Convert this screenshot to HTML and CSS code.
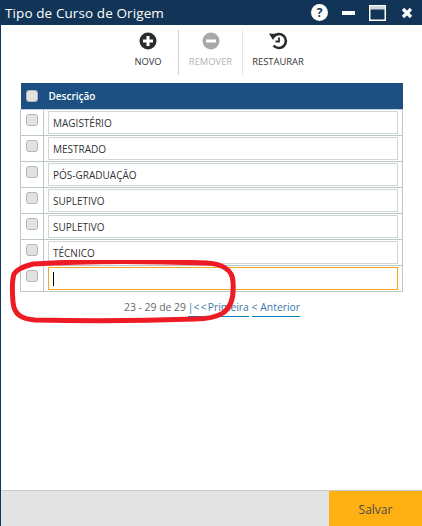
FILE: index.html
```html
<!DOCTYPE html>
<html lang="pt-BR">
<head>
    <meta charset="UTF-8">
    <title>Tipo de Curso de Origem</title>
    <link rel="stylesheet" href="styles.css">
</head>
<body>
    <div class="window">
        <div class="titlebar">
            <span class="title">Tipo de Curso de Origem</span>
            <div class="window-icons">
                <span class="help">?</span>
                <span class="minimize"></span>
                <svg class="maximize" width="17" height="16" viewBox="0 0 17 16">
                    <rect x="0.75" y="0.75" width="15.5" height="14.5" fill="none" stroke="#fff" stroke-width="1.5"/>
                    <rect x="1" y="1" width="15" height="3.5" fill="#cfd6de"/>
                </svg>
                <svg class="close" width="12" height="12" viewBox="0 0 12 12">
                    <path d="M2 2 L10 10 M10 2 L2 10" stroke="#fff" stroke-width="3.2" fill="none"/>
                </svg>
            </div>
        </div>

        <div class="content">
            <div class="toolbar">
                <div class="tool tool-novo">
                    <svg width="18" height="18" viewBox="0 0 18 18">
                        <circle cx="9" cy="9" r="8.5" fill="#2b2b2b"/>
                        <path d="M9 4 V14 M4 9 H14" stroke="#fff" stroke-width="3"/>
                    </svg>
                    <span>NOVO</span>
                </div>
                <div class="tool tool-remover">
                    <svg width="18" height="18" viewBox="0 0 18 18">
                        <circle cx="9" cy="9" r="8.5" fill="#a8a8a8"/>
                        <path d="M4 9 H14" stroke="#fff" stroke-width="3"/>
                    </svg>
                    <span>REMOVER</span>
                </div>
                <div class="tool tool-restaurar">
                    <svg width="20" height="18" viewBox="0 0 20 18">
                        <path d="M5.2 5 A7 7 0 1 1 5.5 13.5" fill="none" stroke="#2b2b2b" stroke-width="2.6"/>
                        <path d="M1 1.5 L8.5 2 L5 8 Z" fill="#2b2b2b"/>
                        <path d="M11 5.5 V9.5 H7.5" fill="none" stroke="#2b2b2b" stroke-width="1.8"/>
                    </svg>
                    <span>RESTAURAR</span>
                </div>
            </div>

            <table class="grid">
                <thead>
                    <tr>
                        <th class="check-col"><span class="check"></span></th>
                        <th>Descrição</th>
                    </tr>
                </thead>
                <tbody>
                    <tr>
                        <td class="check-col"><span class="check"></span></td>
                        <td><div class="field">MAGISTÉRIO</div></td>
                    </tr>
                    <tr>
                        <td class="check-col"><span class="check"></span></td>
                        <td><div class="field">MESTRADO</div></td>
                    </tr>
                    <tr>
                        <td class="check-col"><span class="check"></span></td>
                        <td><div class="field">PÓS-GRADUAÇÃO</div></td>
                    </tr>
                    <tr>
                        <td class="check-col"><span class="check"></span></td>
                        <td><div class="field">SUPLETIVO</div></td>
                    </tr>
                    <tr>
                        <td class="check-col"><span class="check"></span></td>
                        <td><div class="field">SUPLETIVO</div></td>
                    </tr>
                    <tr>
                        <td class="check-col"><span class="check"></span></td>
                        <td><div class="field">TÉCNICO</div></td>
                    </tr>
                    <tr>
                        <td class="check-col"><span class="check"></span></td>
                        <td><div class="field active"><span class="caret"></span></div></td>
                    </tr>
                </tbody>
            </table>

            <div class="pager">
                <span class="count">23 - 29 de 29</span>
                <a class="link link-first">|&lt; &lt; Primeira</a>
                <a class="link">&lt; Anterior</a>
            </div>
        </div>

        <div class="footer">
            <button class="save">Salvar</button>
        </div>

        <!-- marcacao vermelha feita em cima do print -->
        <svg class="scribble" width="240" height="70" viewBox="0 0 240 70">
            <path d="M33 4 C80 1 150 1 207 3 C222 4 233 10 233 22 C234 35 232 47 223 53 C215 58 205 59 195 59 C140 61 80 61 35 60 C22 59 14 55 13 42 C12 30 12 20 14 14 C17 9 25 6 33 4 Z" fill="none" stroke="#ed1c24" stroke-width="5"/>
        </svg>
    </div>
</body>
</html>
```

FILE: styles.css
```css
* {
    box-sizing: border-box;
}
html, body {
    height: 100%;
}
body {
    margin: 0;
    font-family: "Open Sans", Arial, sans-serif;
    background-color: #fff;
}
.window {
    position: relative;
    display: flex;
    flex-direction: column;
    height: 526px;
    border-left: 1px solid #123456;
}
.titlebar {
    display: flex;
    align-items: center;
    justify-content: space-between;
    height: 25px;
    padding: 0 9px 0 4px;
    background-color: #123456;
    color: #fff;
}
.title {
    font-size: 13.5px;
    letter-spacing: 0.1px;
}
.window-icons {
    display: flex;
    align-items: center;
}
.help {
    width: 17px;
    height: 17px;
    border-radius: 50%;
    background-color: #fff;
    color: #123456;
    font-size: 12px;
    font-weight: 700;
    line-height: 17px;
    text-align: center;
}
.minimize {
    width: 13px;
    height: 4px;
    margin-left: 14px;
    background-color: #fff;
}
.maximize {
    margin-left: 14px;
}
.close {
    margin-left: 15px;
}
.content {
    flex: 1;
    padding: 5px 18px 0 19px;
}
.toolbar {
    display: flex;
    justify-content: flex-start;
    height: 53px;
    padding-left: 98px;
}
.tool {
    display: flex;
    flex-direction: column;
    align-items: center;
    height: 45px;
    font-size: 9.4px;
    color: #333;
}
.tool svg {
    margin-top: 2px;
    margin-bottom: 5px;
}
.tool span {
    line-height: 14px;
}
.tool-novo {
    width: 61px;
    border-right: 1px solid #cfcfcf;
}
.tool-remover {
    width: 64px;
    border-right: 1px solid #e6e6e6;
    color: #b4b4b4;
}
.tool-restaurar {
    width: 70px;
}
.grid {
    width: 383px;
    border-collapse: collapse;
    table-layout: fixed;
    font-size: 10px;
    color: #333;
}
.grid th {
    height: 26px;
    padding: 0 0 0 5px;
    background-color: #1d5082;
    border-bottom: 1px solid #c3ced6;
    color: #fff;
    font-size: 10px;
    font-weight: 600;
    text-align: left;
}
.grid td {
    height: 26px;
    padding: 0 4px 0 4px;
    border: 1px solid #bcc7c9;
}
.grid .check-col {
    width: 23px;
    padding: 0 0 0 5px;
    text-align: left;
    vertical-align: top;
}
.grid th.check-col {
    vertical-align: middle;
}
.check {
    display: block;
    width: 12px;
    height: 12px;
    margin-top: 4px;
    border: 1px solid #b5b5b5;
    border-radius: 3px;
    background-color: #e2e2e2;
}
th .check {
    margin-top: 0;
}
.field {
    display: flex;
    align-items: center;
    height: 23px;
    padding: 1px 0 0 4px;
    border: 1px solid #cfd6d6;
    background-color: #fff;
}
.field.active {
    border-color: #f5a81c;
}
.caret {
    width: 1px;
    height: 14px;
    background-color: #000;
}
.pager {
    margin-top: 7px;
    padding-left: 104px;
    font-size: 10.4px;
    line-height: 16px;
    color: #666;
    white-space: nowrap;
}
.link {
    display: inline-block;
    height: 18px;
    border-bottom: 1px solid #0a7fb8;
    color: #3b78a8;
}
.link-first {
    margin-left: -1px;
    word-spacing: -1.5px;
}
.footer {
    display: flex;
    justify-content: flex-end;
    height: 36px;
    border-top: 1px solid #cbcbcb;
    background-color: #e3e3e3;
}
.save {
    width: 93px;
    padding-top: 3px;
    border: none;
    background-color: #ffb114;
    color: #4a4a4a;
    font-family: inherit;
    font-size: 12px;
}
.scribble {
    position: absolute;
    left: -1px;
    top: 260px;
}
```
